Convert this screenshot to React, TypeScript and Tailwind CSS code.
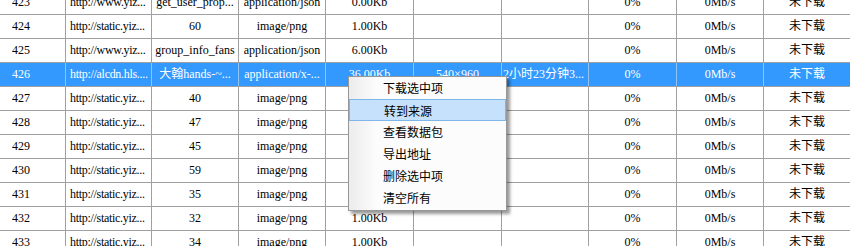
type Row = {
    id: string;
    url: string;
    name: string;
    mime: string;
    size: string;
    res?: string;
    time?: string;
    selected?: boolean;
};

const rows: Row[] = [
    { id: '423', url: 'http://www.yiz...', name: 'get_user_prop...', mime: 'application/json', size: '0.00Kb' },
    { id: '424', url: 'http://static.yiz...', name: '60', mime: 'image/png', size: '1.00Kb' },
    { id: '425', url: 'http://www.yiz...', name: 'group_info_fans', mime: 'application/json', size: '6.00Kb' },
    {
        id: '426',
        url: 'http://alcdn.hls....',
        name: '大翰hands-~...',
        mime: 'application/x-...',
        size: '36.00Kb',
        res: '540×960',
        time: '2小时23分钟3...',
        selected: true,
    },
    { id: '427', url: 'http://static.yiz...', name: '40', mime: 'image/png', size: '1.00Kb' },
    { id: '428', url: 'http://static.yiz...', name: '47', mime: 'image/png', size: '1.00Kb' },
    { id: '429', url: 'http://static.yiz...', name: '45', mime: 'image/png', size: '1.00Kb' },
    { id: '430', url: 'http://static.yiz...', name: '59', mime: 'image/png', size: '1.00Kb' },
    { id: '431', url: 'http://static.yiz...', name: '35', mime: 'image/png', size: '1.00Kb' },
    { id: '432', url: 'http://static.yiz...', name: '32', mime: 'image/png', size: '1.00Kb' },
    { id: '433', url: 'http://static.yiz...', name: '34', mime: 'image/png', size: '1.00Kb' },
];

const menuItems = ['下载选中项', '转到来源', '查看数据包', '导出地址', '删除选中项', '清空所有'];

const TableRow = ({ row }: { row: Row }) => {
    const sel = row.selected;
    const line = sel ? 'border-[#8fc3f5]' : 'border-[#a0a0a0]';
    const cell = `h-full shrink-0 border-r ${line} overflow-hidden whitespace-nowrap leading-[23px]`;

    return (
        <div
            className={`flex h-[24px] border-b border-[#a0a0a0] ${
                sel ? 'bg-[#3399ff] text-white' : 'bg-white text-black'
            }`}
        >
            <div className={`${cell} w-[66px] pl-[12px]`}>{row.id}</div>
            <div className={`${cell} w-[86px] pl-[4px] tracking-[-0.3px]`}>{row.url}</div>
            <div className={`${cell} w-[87px] text-center`}>{row.name}</div>
            <div className={`${cell} w-[87px] text-center`}>{row.mime}</div>
            <div className={`${cell} w-[88px] text-center`}>{row.size}</div>
            <div className={`${cell} w-[88px] text-center`}>{row.res}</div>
            <div className={`${cell} w-[87px] pl-[1px]`}>{row.time}</div>
            <div className={`${cell} w-[88px] text-center`}>0%</div>
            <div className={`${cell} w-[87px] text-center`}>0Mb/s</div>
            <div className="h-full flex-1 overflow-hidden whitespace-nowrap text-center leading-[23px]">
                未下载
            </div>
        </div>
    );
};

export default function App() {
    return (
        <div
            className="relative h-[246px] w-[850px] overflow-hidden bg-white text-[12px]"
            style={{ fontFamily: '"Liberation Serif", "Noto Sans CJK SC", serif' }}
        >
            {/* Task list */}
            <div className="-mt-[9px] flex flex-col">
                {rows.map((row) => (
                    <TableRow key={row.id} row={row} />
                ))}
            </div>

            {/* Context menu */}
            <div
                className="absolute left-[348px] top-[76px] w-[159px] border border-[#979797] bg-[#fcfcfc] shadow-[3px_3px_3px_rgba(0,0,0,0.4)]"
                style={{ fontFamily: '"Noto Sans CJK SC", "Noto Sans", sans-serif' }}
            >
                <div className="pointer-events-none absolute bottom-0 left-0 top-0 w-[26px] bg-gradient-to-r from-[#ececec] to-[#fbfbfb]" />
                <div className="relative flex flex-col pb-[1px]">
                    {menuItems.map((item, i) => (
                        <div
                            key={item}
                            className={`h-[22px] pl-[34px] text-[12px] leading-[21px] text-black ${
                                i === 1 ? 'border border-[#7fb6ea] bg-[#c6e1fb] pl-[33px] leading-[20px]' : ''
                            }`}
                        >
                            {item}
                        </div>
                    ))}
                </div>
            </div>
        </div>
    );
}
